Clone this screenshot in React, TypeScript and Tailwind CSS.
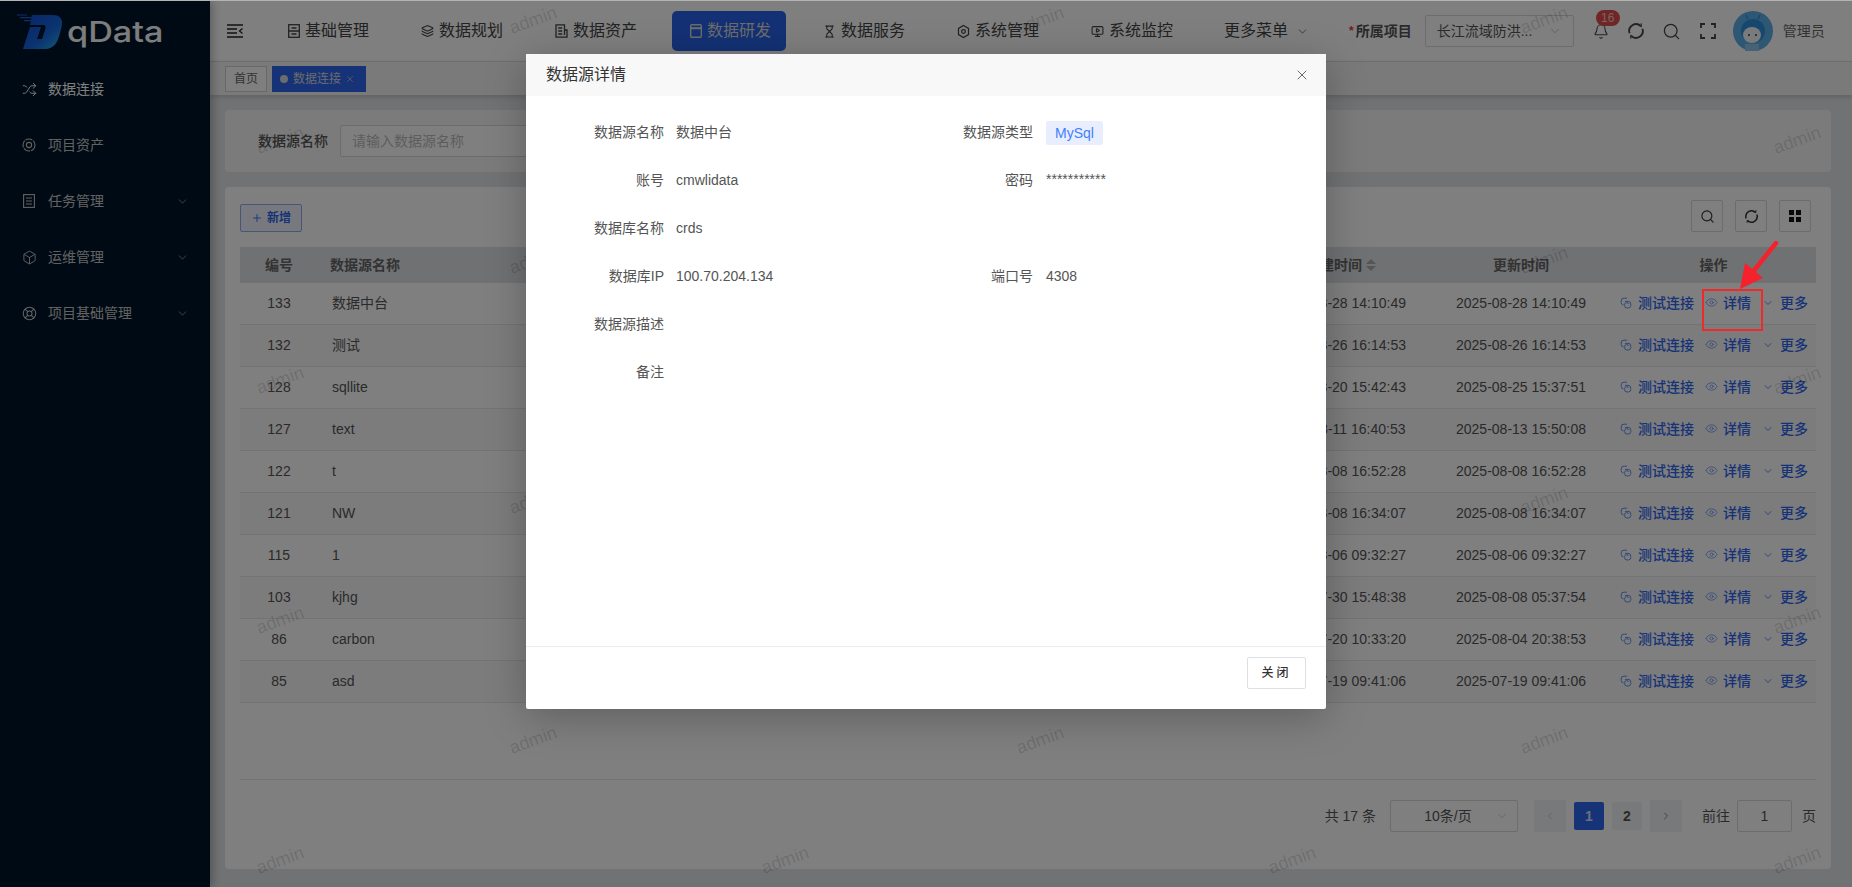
import { Bell, Box, ChevronDown, ChevronLeft, ChevronRight, Eye, Hourglass, Layers, LifeBuoy, MonitorPlay, Plus, Search, Shuffle, X } from "lucide-react";

const font = "font-['Liberation_Sans','Noto_Sans_CJK_SC',sans-serif]";

const rows = [
  { id: 133, name: "数据中台", created: "2025-08-28 14:10:49", updated: "2025-08-28 14:10:49" },
  { id: 132, name: "测试", created: "2025-08-26 16:14:53", updated: "2025-08-26 16:14:53" },
  { id: 128, name: "sqllite", created: "2025-08-20 15:42:43", updated: "2025-08-25 15:37:51" },
  { id: 127, name: "text", created: "2025-08-11 16:40:53", updated: "2025-08-13 15:50:08" },
  { id: 122, name: "t", created: "2025-08-08 16:52:28", updated: "2025-08-08 16:52:28" },
  { id: 121, name: "NW", created: "2025-08-08 16:34:07", updated: "2025-08-08 16:34:07" },
  { id: 115, name: "1", created: "2025-08-06 09:32:27", updated: "2025-08-06 09:32:27" },
  { id: 103, name: "kjhg", created: "2025-07-30 15:48:38", updated: "2025-08-08 05:37:54" },
  { id: 86, name: "carbon", created: "2025-07-20 10:33:20", updated: "2025-08-04 20:38:53" },
  { id: 85, name: "asd", created: "2025-07-19 09:41:06", updated: "2025-07-19 09:41:06" },
];

// watermark tiles
const marks: { x: number; y: number }[] = [];
[20, 140, 260, 380, 500, 620, 740, 860].forEach((y, i) => {
  const xs = i % 2 === 0 ? [533, 1040, 1544] : [280, 785, 1292, 1797];
  xs.forEach((x) => marks.push({ x, y }));
});

const CircleArrows = ({ className }: { className?: string }) => (
  <svg viewBox="0 0 18 18" fill="none" stroke="currentColor" strokeWidth="1.8" className={className}>
    <path d="M13.8 4.2A6.8 6.8 0 0 0 2.6 11.3" />
    <path d="M4.2 13.8A6.8 6.8 0 0 0 15.4 6.7" />
    <path d="M11.5 2.6l2.6 1.8 .2-3M6.5 15.4l-2.6-1.8-.2 3" strokeWidth="1.2" />
  </svg>
);

const LinkIcon = ({ className }: { className?: string }) => (
  <svg viewBox="0 0 12 12" fill="none" stroke="currentColor" strokeWidth="1" className={className}>
    <path d="M7 1.2H4A2.6 2.6 0 0 0 1.2 4v1.4A2.6 2.6 0 0 0 3.6 8" />
    <path d="M5 4.4h3A2.6 2.6 0 0 1 10.8 7v1.4A2.6 2.6 0 0 1 8.2 11H7A2.4 2.4 0 0 1 4.6 8.4V7.4A2 2 0 0 1 6.4 5.6H7A1.6 1.6 0 0 1 8.4 7" />
  </svg>
);

const NavBase = () => (
  <svg viewBox="0 0 12 14" fill="none" stroke="currentColor" strokeWidth="1.3" className="h-[14px] w-[12px]">
    <rect x="0.7" y="0.7" width="10.6" height="12.6" />
    <path d="M0.7 7h10.6M3.5 4h5M3.5 10h5" />
  </svg>
);

const NavDoc = () => (
  <svg viewBox="0 0 13 14" fill="none" stroke="currentColor" strokeWidth="1.3" className="h-[14px] w-[13px]">
    <path d="M9.5 11V0.8H1v12.4h11V6H9.5" />
    <path d="M3.2 4h4M3.2 7h4M3.2 10h4" />
  </svg>
);

const NavDev = () => (
  <svg viewBox="0 0 12 14" fill="none" stroke="currentColor" strokeWidth="1.4" className="h-[14px] w-[12px]">
    <rect x="0.7" y="0.7" width="10.6" height="12.6" rx="1" />
    <path d="M0.7 4.2h10.6" strokeWidth="2" />
  </svg>
);

const NavGear = () => (
  <svg viewBox="0 0 14 15" fill="none" stroke="currentColor" strokeWidth="1.3" className="h-[15px] w-[14px]">
    <path d="M7 1l5.4 3.2v6.6L7 14l-5.4-3.2V4.2z" />
    <circle cx="7" cy="7.5" r="2" />
  </svg>
);

const nav = [
  { label: "基础管理", icon: <NavBase /> },
  { label: "数据规划", icon: <Layers className="h-[14px] w-[14px]" /> },
  { label: "数据资产", icon: <NavDoc /> },
  { label: "数据研发", icon: <NavDev />, active: true },
  { label: "数据服务", icon: <Hourglass className="h-[15px] w-[15px]" /> },
  { label: "系统管理", icon: <NavGear /> },
  { label: "系统监控", icon: <MonitorPlay className="h-[15px] w-[15px]" /> },
];

const side = [
  { label: "数据连接", icon: <Shuffle className="h-[15px] w-[15px]" strokeWidth={1.5} />, active: true },
  {
    label: "项目资产",
    icon: (
      <svg viewBox="0 0 14 14" fill="none" stroke="currentColor" strokeWidth="1.1" className="h-[14px] w-[14px]">
        <circle cx="7" cy="7" r="6" strokeDasharray="7 1" />
        <circle cx="7" cy="7" r="2.6" />
      </svg>
    ),
  },
  {
    label: "任务管理",
    icon: (
      <svg viewBox="0 0 12 14" fill="none" stroke="currentColor" strokeWidth="1.1" className="h-[14px] w-[12px]">
        <rect x="0.6" y="0.6" width="10.8" height="12.8" />
        <path d="M3 4h6M3 7h6M3 10h6" />
      </svg>
    ),
    arrow: true,
  },
  { label: "运维管理", icon: <Box className="h-[15px] w-[15px]" strokeWidth={1.5} />, arrow: true },
  { label: "项目基础管理", icon: <LifeBuoy className="h-[15px] w-[15px]" strokeWidth={1.7} />, arrow: true },
];

const detail = [
  ["数据源名称", "数据中台", "数据源类型", "tag"],
  ["账号", "cmwlidata", "密码", "***********"],
  ["数据库名称", "crds", "", ""],
  ["数据库IP", "100.70.204.134", "端口号", "4308"],
  ["数据源描述", "", "", ""],
  ["备注", "", "", ""],
];

export default function App() {
  return (
    <div className={`relative flex h-[887px] w-[1852px] flex-col overflow-hidden bg-[#e2e4e7] ${font}`}>
      <div className="relative z-50 h-px w-full shrink-0 bg-[#b4b4b4]" />

      <div className="flex min-h-0 flex-1">
        {/* Sidebar */}
        <aside className="relative z-10 w-[210px] shrink-0 bg-[#001529] text-[#f2f2f2] shadow-[3px_0_8px_rgba(0,0,0,0.25)]">
          <div className="flex h-[60px] items-center pl-[17px]">
            <svg viewBox="0 0 45 35" className="h-[35px] w-[45px] shrink-0">
              <defs>
                <linearGradient id="logoFill" x1="0" y1="0" x2="1" y2="1">
                  <stop offset="0" stopColor="#1249d0" />
                  <stop offset="0.6" stopColor="#1668e0" />
                  <stop offset="1" stopColor="#28b4ec" />
                </linearGradient>
              </defs>
              <path d="M0 0.5h10v1H0zM3 3h12v1.2H3zM7 6h9v1.2H7z" fill="#1a5ae0" />
              <path d="M15 1h21c6 0 9 3 9 8 0 3-1 6-2 10-2 9-6 16-15 16H6l7-22h11l-4 12h5l3-9c1-3 1-5-2-5H13z" fill="url(#logoFill)" />
            </svg>
            <span className="ml-[5px] origin-left scale-x-[1.18] font-['Inter',sans-serif] text-[29px] font-medium leading-none text-[#fafafa]">qData</span>
          </div>
          {side.map((s) => (
            <div key={s.label} className={`flex h-14 items-center pl-[21px] pr-[21px] ${s.active ? "text-[#ffffff]" : "text-[#c4c4c4]"}`}>
              <span className="flex w-[16px] justify-center">{s.icon}</span>
              <span className="ml-[11px] flex-1 text-sm">{s.label}</span>
              {s.arrow && <ChevronDown className="h-[13px] w-[13px]" strokeWidth={1.2} />}
            </div>
          ))}
        </aside>

        <div className="flex min-w-0 flex-1 flex-col">
          {/* Top bar */}
          <header className="flex h-[60px] shrink-0 items-center bg-white text-[#444]">
            <div className="ml-[17px] w-[43px]">
              <svg viewBox="0 0 16 14" fill="none" stroke="#222" strokeWidth="1.6" className="h-[14px] w-[16px]">
                <path d="M0 1h16M0 13h16M0 5h10M0 9h10" />
                <path d="M15.5 4.5L12.5 7l3 2.5" strokeWidth="1.3" />
              </svg>
            </div>
            <nav className="flex items-center gap-5">
              {nav.map((n) => (
                <div
                  key={n.label}
                  className={`flex h-10 w-[114px] items-center rounded-[5px] pl-[17px] text-base ${n.active ? "bg-[#2762e8] text-[#d8d8d8]" : ""}`}
                >
                  <span className="flex w-[13px] shrink-0 justify-center">{n.icon}</span>
                  <span className="ml-[5px] whitespace-nowrap">{n.label}</span>
                </div>
              ))}
              <div className="flex w-[100px] items-center pl-[16px] text-base">
                <span className="whitespace-nowrap">更多菜单</span>
                <ChevronDown className="ml-[8px] h-[13px] w-[13px] shrink-0" strokeWidth={1.3} />
              </div>
            </nav>
            <div className="ml-[41px] flex items-center text-sm font-semibold text-[#555]">
              <span className="mr-[2px] text-xs text-[#e33]">*</span>所属项目
            </div>
            <div className="ml-[13px] flex h-8 w-[149px] items-center justify-between rounded-[2px] border border-[#d8d8d8] pl-[11px] pr-[11px] text-sm text-[#555]">
              <span className="whitespace-nowrap">长江流域防洪...</span>
              <ChevronDown className="h-[14px] w-[14px] text-[#aaa]" strokeWidth={1.2} />
            </div>
            <div className="relative ml-[19px] flex h-6 w-[16px] items-center justify-center">
              <Bell className="h-[17px] w-[17px]" strokeWidth={1.6} />
              <span className="absolute left-[3px] top-[-9px] flex h-4 w-[24px] items-center justify-center rounded-full bg-[#e14d4d] text-xs leading-none text-[#f5c8c8]">16</span>
            </div>
            <CircleArrows className="ml-[18px] h-[18px] w-[18px]" />
            <Search className="ml-[17px] h-[19px] w-[19px]" strokeWidth={1.6} />
            <svg viewBox="0 0 16 16" fill="none" stroke="currentColor" strokeWidth="1.8" className="ml-[19px] h-[16px] w-[16px]">
              <path d="M1 5V1h4M11 1h4v4M15 11v4h-4M5 15H1v-4" />
            </svg>
            <svg viewBox="0 0 40 40" className="ml-[17px] h-10 w-10 shrink-0">
              <circle cx="20" cy="20" r="20" fill="#5aaee6" />
              <circle cx="20" cy="20" r="12" fill="#2f8fdc" />
              <ellipse cx="19" cy="24" rx="9" ry="8" fill="#f4f6f8" />
              <circle cx="16" cy="24" r="1" fill="#333" />
              <circle cx="23" cy="24" r="1" fill="#333" />
              <path d="M12 33h14v7H12z" fill="#8cc4ea" />
              <path d="M15 8l-2-4M25 8l2-4" stroke="#2f8fdc" strokeWidth="1.5" />
            </svg>
            <span className="ml-[10px] whitespace-nowrap text-sm text-[#666]">管理员</span>
          </header>

          {/* Tabs */}
          <div className="relative z-[1] flex h-[34px] shrink-0 items-center gap-[5px] border-t border-[#dcdcdc] bg-[#f5f5f5] pl-[15px] shadow-[0_2px_5px_rgba(0,0,0,0.15)]">
            <div className="flex h-[26px] w-[42px] items-center justify-center border border-[#d0d0d0] bg-white text-xs text-[#666]">首页</div>
            <div className="flex h-[26px] w-[94px] items-center bg-[#2c66f0] pl-2 text-xs text-[#d8d8d8]">
              <span className="h-2 w-2 rounded-full bg-[#d8d8d8]" />
              <span className="ml-[5px]">数据连接</span>
              <X className="ml-[4px] h-[10px] w-[10px]" strokeWidth={1.5} />
            </div>
          </div>

          {/* Page */}
          <main className="flex min-h-0 flex-1 flex-col gap-[15px] pb-[18px] pl-[15px] pr-[21px] pt-[15px]">
            <section className="flex h-[62px] shrink-0 items-center rounded-sm bg-[#f6f7f8] pl-[33px]">
              <span className="w-[82px] text-sm font-medium text-[#555]">数据源名称</span>
              <div className="flex h-8 w-[260px] items-center rounded-[2px] border border-[#d8d8d8] bg-white pl-[11px] text-sm text-[#bbb]">请输入数据源名称</div>
            </section>

            <section className="flex min-h-0 flex-1 flex-col rounded-sm bg-white pl-[15px] pr-[15px] pt-[13px]">
              <div className="flex h-[32px] shrink-0 items-end justify-between pr-[5px]">
                <button className="flex h-[28px] w-[62px] items-center justify-center gap-1 rounded-[2px] border border-[#8faaef] bg-[#eef3ff] text-xs font-bold text-[#2c66f0]">
                  <Plus className="h-3 w-3" strokeWidth={1.8} />
                  新增
                </button>
                <div className="flex gap-[12px] text-[#333]">
                  <div className="flex h-8 w-[32px] items-center justify-center rounded-[2px] border border-[#d8d8d8]">
                    <Search className="h-[15px] w-[15px]" strokeWidth={1.8} />
                  </div>
                  <div className="flex h-8 w-[32px] items-center justify-center rounded-[2px] border border-[#d8d8d8]">
                    <CircleArrows className="h-[15px] w-[15px]" />
                  </div>
                  <div className="flex h-8 w-[32px] items-center justify-center rounded-[2px] border border-[#d8d8d8]">
                    <svg viewBox="0 0 12 12" fill="#111" className="h-[12px] w-[12px]">
                      <rect width="5" height="5" />
                      <rect x="7" width="5" height="5" />
                      <rect y="7" width="5" height="5" />
                      <rect x="7" y="7" width="5" height="5" />
                    </svg>
                  </div>
                </div>
              </div>

              <div className="mt-[15px] grid h-9 shrink-0 grid-cols-[78px_1fr_180px_180px_205px] items-center bg-[#e0e2e7] text-sm font-semibold text-[#666]">
                <span className="text-center">编号</span>
                <span className="pl-3">数据源名称</span>
                <span className="flex items-center justify-center gap-1">
                  创建时间
                  <span className="flex flex-col gap-[2px]">
                    <span className="h-0 w-0 border-x-[5px] border-b-[5px] border-x-transparent border-b-[#aaa]" />
                    <span className="h-0 w-0 border-x-[5px] border-t-[5px] border-x-transparent border-t-[#aaa]" />
                  </span>
                </span>
                <span className="text-center">更新时间</span>
                <span className="text-center">操作</span>
              </div>

              {rows.map((r, i) => (
                <div
                  key={r.id}
                  className={`grid h-[42px] shrink-0 grid-cols-[78px_1fr_180px_180px_205px] items-center border-b border-[#e4e6ee] pb-[2px] text-sm text-[#555] ${i % 2 ? "bg-[#f8f8fa]" : "bg-white"}`}
                >
                  <span className="text-center">{r.id}</span>
                  <span className="pl-[14px]">{r.name}</span>
                  <span className="text-center">{r.created}</span>
                  <span className="text-center">{r.updated}</span>
                  <div className="flex items-center pl-[9px] font-medium text-[#2c66f0]">
                    <LinkIcon className="h-[12px] w-[12px] opacity-70" />
                    <span className="ml-[6px]">测试连接</span>
                    <Eye className="ml-[11px] h-[13px] w-[13px] opacity-70" strokeWidth={1.4} />
                    <span className="ml-[5px]">详情</span>
                    <ChevronDown className="ml-[11px] h-[12px] w-[12px]" strokeWidth={1.5} />
                    <span className="ml-[6px]">更多</span>
                  </div>
                </div>
              ))}

              <div className="mt-auto flex h-[90px] shrink-0 items-center justify-end border-t border-[#e4e4e4] pb-[18px] text-sm text-[#555]">
                <span>共 17 条</span>
                <div className="relative ml-[14px] flex h-8 w-[128px] items-center justify-center rounded-[2px] border border-[#d8d8d8] pr-[12px]">
                  10条/页
                  <ChevronDown className="absolute right-[8px] h-[14px] w-[14px] text-[#bbb]" strokeWidth={1.2} />
                </div>
                <div className="ml-[16px] flex h-8 w-[32px] items-center justify-center rounded-[2px] bg-[#f0f2f5] text-[#bbb]">
                  <ChevronLeft className="h-[12px] w-[12px]" strokeWidth={1.4} />
                </div>
                <div className="ml-[8px] flex h-7 w-[30px] items-center justify-center rounded-[2px] bg-[#2c66f0] font-bold text-[#cfe0ff]">1</div>
                <div className="ml-[8px] flex h-7 w-[30px] items-center justify-center rounded-[2px] bg-[#f0f2f5] font-bold">2</div>
                <div className="ml-[8px] flex h-8 w-[32px] items-center justify-center rounded-[2px] bg-[#f0f2f5]">
                  <ChevronRight className="h-[12px] w-[12px]" strokeWidth={1.4} />
                </div>
                <span className="ml-[20px]">前往</span>
                <div className="ml-[7px] flex h-8 w-[55px] items-center justify-center rounded-[2px] border border-[#d8d8d8]">1</div>
                <span className="ml-[10px]">页</span>
              </div>
            </section>
          </main>
        </div>
      </div>

      {/* Watermark */}
      <div className="pointer-events-none absolute inset-0 z-20">
        {marks.map((m) => (
          <span
            key={`${m.x}-${m.y}`}
            className="absolute -translate-x-1/2 -translate-y-1/2 -rotate-[20deg] text-lg text-[#000]/15"
            style={{ left: m.x, top: m.y }}
          >
            admin
          </span>
        ))}
      </div>

      {/* Dialog mask */}
      <div className="absolute inset-0 z-30 bg-black/50" />

      {/* Dialog */}
      <div className="absolute left-[526px] top-[54px] z-40 flex h-[655px] w-[800px] flex-col rounded-b-[2px] bg-white shadow-[0_8px_40px_rgba(0,0,0,0.25)]">
        <div className="flex h-[42px] shrink-0 items-center justify-between bg-[#f8f8f8] pl-5 pr-[16px]">
          <span className="text-base text-[#333]">数据源详情</span>
          <X className="h-[16px] w-[16px] text-[#444]" strokeWidth={1.2} />
        </div>
        <div className="flex-1 pt-[12px]">
          {detail.map((d) => (
            <div key={d[0]} className="grid h-12 grid-cols-[138px_12px_200px_157px_13px_1fr] items-center text-sm text-[#555]">
              <span className="text-right">{d[0]}</span>
              <span />
              <span>{d[1]}</span>
              <span className="text-right">{d[2]}</span>
              <span />
              {d[3] === "tag" ? (
                <span className="flex h-6 w-[57px] translate-y-px items-center justify-center rounded-[2px] bg-[#e8eefe] text-[#4080ff]">MySql</span>
              ) : (
                <span className={d[3].startsWith("*") ? "-translate-y-px" : ""}>{d[3]}</span>
              )}
            </div>
          ))}
        </div>
        <div className="flex h-[63px] shrink-0 justify-end border-t border-[#ececec] pr-5 pt-[10px]">
          <button className="flex h-8 w-[59px] items-center justify-center rounded-[2px] border border-[#dcdfe6] bg-white text-xs font-medium tracking-[3px] text-[#333]">关闭</button>
        </div>
      </div>

      {/* Annotation drawn over the screenshot */}
      <div className="absolute left-[1702px] top-[289px] z-50 h-[42px] w-[61px] border-2 border-[#ee2a2a]" />
      <svg viewBox="0 0 44 52" className="absolute left-[1737px] top-[241px] z-50 h-[52px] w-[44px]">
        <path d="M39 2L15 32" stroke="#f5212d" strokeWidth="4.5" strokeLinecap="round" />
        <path d="M3 48L8 22 26 37z" fill="#f5212d" />
      </svg>
    </div>
  );
}
